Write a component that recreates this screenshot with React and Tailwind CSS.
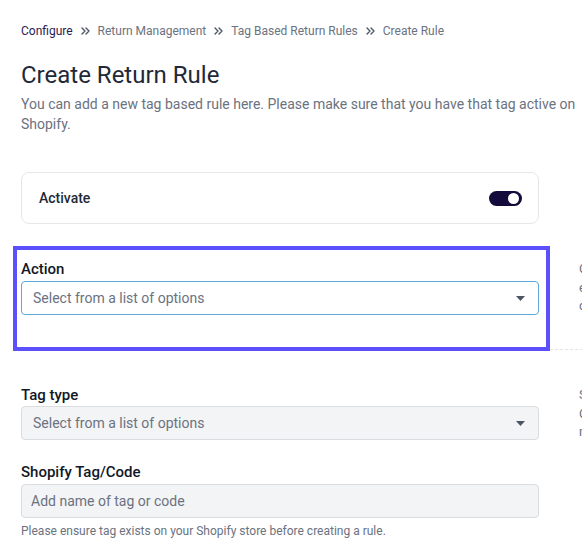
import React from 'react';

const Caret = () => (
  <svg width="9" height="5" viewBox="0 0 9 5" className="shrink-0">
    <path d="M0 0h9L4.5 5z" fill="#4b5563" />
  </svg>
);

const Chevrons = () => (
  <svg width="9" height="8" viewBox="0 0 9 8" className="mx-[8px] shrink-0">
    <path d="M1 1l3 3-3 3M5 1l3 3-3 3" fill="none" stroke="#4b5563" strokeWidth="1.4" strokeLinecap="round" strokeLinejoin="round" />
  </svg>
);

const Crumbs = ({ items }) => (
  <nav className="flex items-center text-[12px] leading-[18px]">
    {items.map((item, i) => (
      <React.Fragment key={item}>
        {i > 0 && <Chevrons />}
        <span className={i === 0 ? 'text-[#2a1b54]' : 'text-[#6b7280]'}>{item}</span>
      </React.Fragment>
    ))}
  </nav>
);

const SelectBox = ({ placeholder, focused }) => (
  <div
    className={
      'flex items-center justify-between h-[34px] rounded-[4px] border pl-[11px] pr-[13px] ' +
      (focused ? 'bg-white border-[#5fa8d8]' : 'bg-[#f3f4f6] border-[#d9dce1]')
    }
  >
    <span className="text-[14px] text-[#6b7280]">{placeholder}</span>
    <Caret />
  </div>
);

const SideNote = ({ lines }) => (
  <div className="text-[13px] leading-[18.5px] text-[#6b7280] whitespace-nowrap">
    {lines.map((l) => (
      <div key={l}>{l}</div>
    ))}
  </div>
);

export default function App() {
  return (
    <div className="w-[582px] h-[556px] overflow-hidden bg-white" style={{ fontFamily: 'Roboto, "Liberation Sans", sans-serif' }}>
      <div className="w-[900px] pl-[21px] pt-[22px]">
        <Crumbs items={['Configure', 'Return Management', 'Tag Based Return Rules', 'Create Rule']} />

        <h1 className="mt-[19px] text-[24px] leading-[32px] text-[#1f2937]">Create Return Rule</h1>
        <p className="mt-[4px] w-[561px] text-[14px] leading-[19.5px] text-[#6b7280]">
          You can add a new tag based rule here. Please make sure that you have that tag active on Shopify.
        </p>

        <div className="mt-[38px] w-[518px] h-[52px] flex items-center justify-between rounded-[8px] border border-[#e5e7eb] pl-[17px] pr-[16px]">
          <span className="text-[14px] font-medium text-[#1f2937]">Activate</span>
          <div className="w-[33px] h-[15px] rounded-full bg-[#150a3c] flex items-center justify-end pr-[3px]">
            <div className="w-[11px] h-[11px] rounded-full bg-white" />
          </div>
        </div>

        <div className="mt-[22px] flex">
          <div className="-ml-[8px] w-[537px] border-[4px] border-[#5b50fb] bg-white pl-[4px] pr-[7px] pt-[9px] pb-[32px]">
            <label className="block text-[15px] leading-[20px] font-medium text-[#111827]">Action</label>
            <div className="mt-[2px]">
              <SelectBox placeholder="Select from a list of options" focused />
            </div>
          </div>
          <div className="flex-1 pl-[29px] pt-[14px] border-b border-dashed border-[#e2e4e8] mb-[1px]">
            <SideNote lines={['Choose the action to apply when', 'eligible orders carry this tag and', 'customers request a return.']} />
          </div>
        </div>

        <div className="mt-[34px] flex">
          <div className="w-[518px]">
            <label className="block text-[15px] leading-[20px] font-medium text-[#111827]">Tag type</label>
            <div className="mt-[1px]">
              <SelectBox placeholder="Select from a list of options" />
            </div>
            <label className="mt-[22px] block text-[15px] leading-[20px] font-medium text-[#111827]">Shopify Tag/Code</label>
            <div className="mt-[2px] h-[34px] flex items-center rounded-[4px] border border-[#d9dce1] bg-[#f3f4f6] pl-[9px]">
              <span className="text-[14px] text-[#6b7280]">Add name of tag or code</span>
            </div>
            <p className="mt-[5px] text-[12px] leading-[16px] text-[#6b7280]">
              Please ensure tag exists on your Shopify store before creating a rule.
            </p>
          </div>
          <div className="ml-[40px] pt-[1px]">
            <SideNote lines={['Select whether the tag is a', 'Customer tag or an Order tag. Tags', 'must match exactly.']} />
          </div>
        </div>
      </div>
    </div>
  );
}
